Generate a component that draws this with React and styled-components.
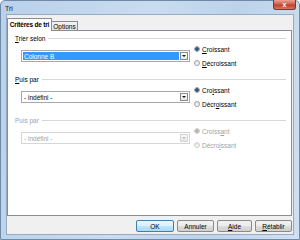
import React from 'react';
import styled, { createGlobalStyle, css } from 'styled-components';

const GlobalStyle = createGlobalStyle`
  html, body {
    margin: 0;
    padding: 0;
    background: #ffffff;
  }
  body {
    width: 300px;
    height: 240px;
    overflow: hidden;
    font-family: "Liberation Sans", Arial, sans-serif;
  }
`;

const Window = styled.div`
  width: 300px;
  height: 240px;
  box-sizing: border-box;
  display: flex;
  flex-direction: column;
  border: 1px solid #6f8aa8;
  border-radius: 5px 5px 0 0;
  padding: 0 5px 4px 5px;
  background: linear-gradient(100deg, #b9d1ea 0%, #c9dcf0 45%, #bcd3ea 70%, #cfe0f2 100%);
`;

const TitleBar = styled.div`
  height: 13px;
  display: flex;
  align-items: flex-start;
  justify-content: space-between;
`;

const Title = styled.span`
  font-size: 7px;
  line-height: 7px;
  margin: 4px 0 0 -1px;
  color: #1a1a1a;
`;

const CloseButton = styled.div`
  width: 23px;
  height: 10px;
  margin: -1px -2px 0 0;
  box-sizing: border-box;
  border: 1px solid #6e3b36;
  border-top: none;
  border-radius: 0 0 3px 3px;
  background: linear-gradient(#e8a293 0%, #d2614c 45%, #c0402a 55%, #d67a5c 100%);
  display: flex;
  align-items: center;
  justify-content: center;
  color: #ffffff;
  font-size: 7px;
  font-weight: bold;
  line-height: 7px;
`;

const Content = styled.div`
  flex: 1;
  display: flex;
  flex-direction: column;
  background: #f0f0f0;
  border: 1px solid #97aac2;
  padding: 3px 1px 2px 0;
`;

const TabRow = styled.div`
  display: flex;
  align-items: flex-end;
  height: 12px;
`;

const Tab = styled.div`
  box-sizing: border-box;
  border: 1px solid #898c95;
  border-bottom: none;
  font-size: 6.5px;
  color: #000;
  display: flex;
  align-items: center;
  justify-content: center;
  white-space: nowrap;
  ${(p) =>
    p.active
      ? css`
          position: relative;
          z-index: 1;
          width: 45px;
          height: 13px;
          margin-bottom: -1px;
          padding-bottom: 1px;
          background: #ffffff;
          font-weight: bold;
          letter-spacing: -0.2px;
        `
      : css`
          width: 27px;
          height: 9px;
          margin-left: -1px;
          background: linear-gradient(#f3f3f3, #e3e3e3);
        `}
`;

const Panel = styled.div`
  height: 186px;
  box-sizing: border-box;
  background: #ffffff;
  border: 1px solid #898c95;
  padding: 3px 5px 0 7px;
  display: flex;
  flex-direction: column;
  gap: 5px;
`;

const Section = styled.div`
  display: flex;
  flex-direction: column;
  color: ${(p) => (p.disabled ? '#a3a3a3' : '#000000')};
`;

const Header = styled.div`
  height: 8px;
  display: flex;
  align-items: center;
  gap: 3px;
  font-size: 6.5px;

  &::after {
    content: '';
    flex: 1;
    height: 1px;
    background: #d5dadf;
  }
`;

const Row = styled.div`
  display: flex;
  align-items: center;
  padding-left: 6px;
  gap: 4px;
`;

const Select = styled.div`
  width: 169px;
  height: 12px;
  box-sizing: border-box;
  border: 1px solid ${(p) => (p.disabled ? '#d4d6d9' : '#a5a8ae')};
  background: #ffffff;
  display: flex;
  align-items: center;
  padding: 1px;
  gap: 1px;
`;

const Value = styled.div`
  flex: 1;
  height: 8px;
  display: flex;
  align-items: center;
  padding-left: 1px;
  font-size: 6.5px;
  color: ${(p) => (p.disabled ? '#a3a3a3' : '#000000')};
  ${(p) =>
    p.selected &&
    css`
      background: #3399ff;
      color: #ffffff;
    `}
`;

const DropButton = styled.div`
  width: 8px;
  height: 8px;
  box-sizing: border-box;
  border: 1px solid ${(p) => (p.disabled ? '#d6d6d6' : '#8a8a8a')};
  background: linear-gradient(#fbfbfb, #e4e4e4);
  display: flex;
  align-items: center;
  justify-content: center;
`;

const Arrow = styled.div`
  width: 0;
  height: 0;
  border-left: 2px solid transparent;
  border-right: 2px solid transparent;
  border-top: 2px solid ${(p) => (p.disabled ? '#bdbdbd' : '#1a1a1a')};
`;

const RadioGroup = styled.div`
  display: flex;
  flex-direction: column;
`;

const RadioItem = styled.div`
  height: 14px;
  display: flex;
  align-items: center;
  gap: 2px;
  font-size: 6.5px;
`;

const RadioCircle = styled.span`
  width: 6px;
  height: 6px;
  box-sizing: border-box;
  border-radius: 50%;
  border: 1px solid ${(p) => (p.disabled ? '#cfcfcf' : '#9aa0a8')};
  background: ${(p) =>
    p.checked
      ? p.disabled
        ? 'radial-gradient(circle, #b4b4b4 0 1.6px, #eeeeee 1.8px)'
        : 'radial-gradient(circle, #2c5b7c 0 1.6px, #dfe6ec 1.8px)'
      : 'linear-gradient(#e2e2e2, #fafafa)'};
`;

const Key = styled.u`
  text-underline-offset: 1px;
`;

const ButtonRow = styled.div`
  margin-top: 4px;
  display: flex;
  justify-content: flex-end;
  gap: 3px;
`;

const Button = styled.div`
  width: ${(p) => p.w}px;
  height: 12px;
  box-sizing: border-box;
  border: 1px solid ${(p) => (p.primary ? '#3c7fb1' : '#8a8a8a')};
  border-radius: 2px;
  background: ${(p) =>
    p.primary
      ? 'linear-gradient(#eaf6fd 0%, #d9f0fc 50%, #bee6fd 51%, #a7d9f5 100%)'
      : 'linear-gradient(#f2f2f2 0%, #ebebeb 50%, #dddddd 51%, #cfcfcf 100%)'};
  display: flex;
  align-items: center;
  justify-content: center;
  font-size: 6.5px;
  color: #000;
`;

const sections = [
  {
    title: <><Key>T</Key>rier selon</>,
    value: 'Colonne B',
    selected: true,
    asc: <><Key>C</Key>roissant</>,
    desc: <><Key>D</Key>écroissant</>,
  },
  {
    title: <><Key>P</Key>uis par</>,
    value: '- indéfini -',
    asc: <>Cro<Key>i</Key>ssant</>,
    desc: <>Décr<Key>o</Key>issant</>,
  },
  {
    title: <>Puis par</>,
    value: '- indéfini -',
    disabled: true,
    asc: <>Croiss<Key>a</Key>nt</>,
    desc: <>Décro<Key>i</Key>ssant</>,
  },
];

const SortSection = ({ title, value, selected, disabled, asc, desc }) => (
  <Section disabled={disabled}>
    <Header>
      <span>{title}</span>
    </Header>
    <Row>
      <Select disabled={disabled}>
        <Value selected={selected} disabled={disabled}>{value}</Value>
        <DropButton disabled={disabled}>
          <Arrow disabled={disabled} />
        </DropButton>
      </Select>
      <RadioGroup>
        <RadioItem>
          <RadioCircle checked disabled={disabled} />
          <span>{asc}</span>
        </RadioItem>
        <RadioItem>
          <RadioCircle disabled={disabled} />
          <span>{desc}</span>
        </RadioItem>
      </RadioGroup>
    </Row>
  </Section>
);

const App = () => (
  <>
    <GlobalStyle />
    <Window>
      <TitleBar>
        <Title>Tri</Title>
        <CloseButton>x</CloseButton>
      </TitleBar>
      <Content>
        <TabRow>
          <Tab active>Critères de tri</Tab>
          <Tab>Options</Tab>
        </TabRow>
        <Panel>
          {sections.map((s, i) => (
            <SortSection key={i} {...s} />
          ))}
        </Panel>
        <ButtonRow>
          <Button primary w={38}>OK</Button>
          <Button w={37}>Annuler</Button>
          <Button w={35}><Key>A</Key>ide</Button>
          <Button w={37}><Key>R</Key>établir</Button>
        </ButtonRow>
      </Content>
    </Window>
  </>
);

export default App;
